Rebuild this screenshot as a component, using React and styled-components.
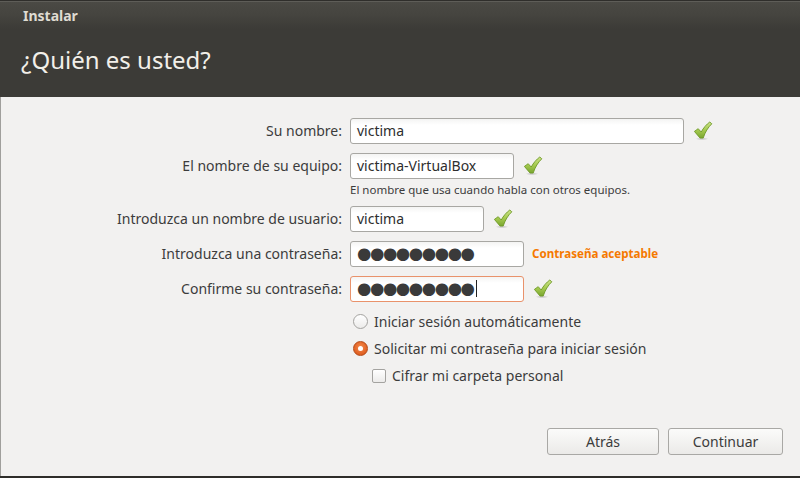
import React from "react";
import styled, { createGlobalStyle } from "styled-components";

const Global = createGlobalStyle`
  html, body { margin: 0; padding: 0; }
  body { width: 800px; height: 478px; overflow: hidden; background: #f2f1f0; font-family: "Noto Sans", "DejaVu Sans", sans-serif; }
  #root { width: 800px; height: 478px; }
`;

const Window = styled.div`
  width: 800px;
  height: 478px;
  display: flex;
  flex-direction: column;
  box-sizing: border-box;
  border-bottom: 2px solid #2e2d2a;
`;

const Header = styled.header`
  height: 97px;
  flex: none;
  box-sizing: border-box;
  border-top: 1px solid #2f2e2b;
  background: linear-gradient(#4b4a45 0px, #45443f 14px, #3c3b37 28px, #3c3b37 100%);
  display: flex;
  flex-direction: column;
  padding-left: 23px;
  box-shadow: inset 0 1px 0 #5e5d58;
`;

const TitleBar = styled.div`
  height: 28px;
  display: flex;
  align-items: center;
  font-weight: 700;
  font-size: 14px;
  color: #dfdbd2;
`;

const Title = styled.h1`
  margin: 16px 0 0 -2px;
  font-weight: 400;
  font-size: 24px;
  color: #f2efe9;
  line-height: 30px;
`;

const Body = styled.main`
  flex: 1;
  display: flex;
  flex-direction: column;
  border-left: 1px solid #a09f9c;
  padding-top: 21px;
`;

const Form = styled.div`
  display: grid;
  grid-template-columns: 341px auto;
  grid-template-rows: 25px 25px 8px 25px 25px 25px;
  column-gap: 8px;
  row-gap: 10px;
  align-items: center;
`;

const Label = styled.label`
  justify-self: end;
  font-size: 14px;
  color: #3c3c3c;
`;

const Field = styled.div`
  display: flex;
  align-items: center;
  gap: 9px;
`;

const Input = styled.div`
  box-sizing: border-box;
  width: ${(p) => p.$w}px;
  height: 26px;
  border: 1px solid ${(p) => (p.$error ? "#e9926b" : "#a8a7a3")};
  border-radius: 3px;
  background: linear-gradient(#f4f4f3, #ffffff 6px);
  display: flex;
  align-items: center;
  padding-left: 6px;
  font-size: 14px;
  color: #2e2e2e;
`;

const Dots = styled.span`
  font-family: "DejaVu Sans", sans-serif;
  font-size: 16.5px;
  letter-spacing: -1.45px;
  color: #3a3a3a;
`;

const Caret = styled.span`
  display: inline-block;
  width: 1px;
  height: 17px;
  background: #222;
  margin-left: 2px;
`;

const Hint = styled.div`
  grid-column: 2;
  align-self: start;
  font-size: 11.5px;
  line-height: 15px;
  color: #3c3c3c;
  margin-top: -6px;
`;

const Strength = styled.span`
  font-weight: 700;
  font-size: 11.6px;
  color: #f57900;
  margin-left: -1px;
`;

const Options = styled.div`
  display: flex;
  flex-direction: column;
  padding-left: 352px;
  margin-top: 12px;
  gap: 10px;
`;

const Option = styled.div`
  display: flex;
  align-items: center;
  gap: 6px;
  font-size: 14px;
  color: #3c3c3c;
  height: 17px;
  margin-left: ${(p) => p.$indent || 0}px;
`;

const Radio = styled.span`
  box-sizing: border-box;
  width: 15px;
  height: 15px;
  border-radius: 50%;
  flex: none;
  display: flex;
  align-items: center;
  justify-content: center;
  border: 1px solid ${(p) => (p.$on ? "#b44a16" : "#a4a3a0")};
  background: ${(p) =>
    p.$on
      ? "radial-gradient(circle at 50% 40%, #f58a4b, #dd5a1d 80%)"
      : "linear-gradient(#ffffff, #ecebea)"};
  &::after {
    content: "";
    display: ${(p) => (p.$on ? "block" : "none")};
    width: 5px;
    height: 5px;
    border-radius: 50%;
    background: #fff;
  }
`;

const Check = styled.span`
  box-sizing: border-box;
  width: 14px;
  height: 14px;
  flex: none;
  border: 1px solid #a4a3a0;
  border-radius: 2px;
  background: linear-gradient(#ffffff, #ecebea);
`;

const Spacer = styled.div`
  flex: 1;
`;

const Buttons = styled.div`
  display: flex;
  justify-content: flex-end;
  gap: 9px;
  padding: 0 17px 21px 0;
`;

const Button = styled.button`
  box-sizing: border-box;
  width: ${(p) => p.$w}px;
  height: 27px;
  border: 1px solid #a9a8a5;
  border-radius: 3px;
  background: linear-gradient(#fbfbfa, #ebeae8);
  font-family: inherit;
  font-size: 14px;
  color: #3c3c3c;
  padding: 0;
`;

function Tick() {
  return (
    <svg width="20" height="20" viewBox="0 0 20 20">
      <defs>
        <linearGradient id="tk" x1="0" y1="0" x2="0" y2="1">
          <stop offset="0" stopColor="#cde28a" />
          <stop offset="0.5" stopColor="#a6cb50" />
          <stop offset="1" stopColor="#7aa630" />
        </linearGradient>
        <radialGradient id="sh" cx="0.5" cy="0.5" r="0.5">
          <stop offset="0" stopColor="#000" stopOpacity="0.22" />
          <stop offset="1" stopColor="#000" stopOpacity="0" />
        </radialGradient>
      </defs>
      <ellipse cx="9" cy="17.8" rx="6.5" ry="1.6" fill="url(#sh)" />
      <path
        d="M1.4 10.4 L5.2 7.7 L8.2 11 C10.4 7 13.4 3.4 16.8 1 L18.8 2.8 C15 6.4 12.2 11 10.2 17 L7 17 Z"
        fill="url(#tk)"
        stroke="#6e9a26"
        strokeWidth="0.9"
        strokeLinejoin="round"
      />
    </svg>
  );
}

export default function App() {
  return (
    <Window>
      <Global />
      <Header>
        <TitleBar>Instalar</TitleBar>
        <Title>¿Quién es usted?</Title>
      </Header>
      <Body>
        <Form>
          <Label>Su nombre:</Label>
          <Field>
            <Input $w={334}>victima</Input>
            <Tick />
          </Field>
          <Label>El nombre de su equipo:</Label>
          <Field>
            <Input $w={164}>victima-VirtualBox</Input>
            <Tick />
          </Field>
          <Hint>El nombre que usa cuando habla con otros equipos.</Hint>
          <Label>Introduzca un nombre de usuario:</Label>
          <Field>
            <Input $w={134}>victima</Input>
            <Tick />
          </Field>
          <Label>Introduzca una contraseña:</Label>
          <Field>
            <Input $w={174}>
              <Dots>●●●●●●●●●</Dots>
            </Input>
            <Strength>Contraseña aceptable</Strength>
          </Field>
          <Label>Confirme su contraseña:</Label>
          <Field>
            <Input $w={174} $error>
              <Dots>●●●●●●●●●</Dots>
              <Caret />
            </Input>
            <Tick />
          </Field>
        </Form>
        <Options>
          <Option>
            <Radio />
            Iniciar sesión automáticamente
          </Option>
          <Option>
            <Radio $on />
            Solicitar mi contraseña para iniciar sesión
          </Option>
          <Option $indent={19}>
            <Check />
            Cifrar mi carpeta personal
          </Option>
        </Options>
        <Spacer />
        <Buttons>
          <Button $w={112}>Atrás</Button>
          <Button $w={115}>Continuar</Button>
        </Buttons>
      </Body>
    </Window>
  );
}
